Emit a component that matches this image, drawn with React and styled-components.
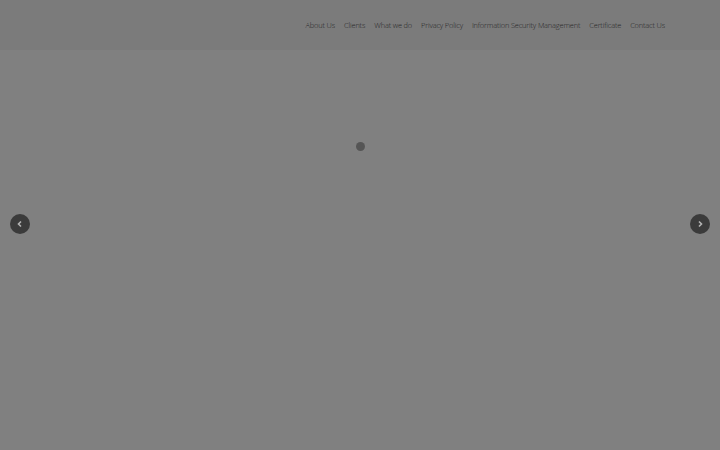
import React from "react";
import styled, { createGlobalStyle } from "styled-components";

const GlobalStyle = createGlobalStyle`
  html, body {
    margin: 0;
    padding: 0;
    background: #808080;
    font-family: "Open Sans", "Liberation Sans", sans-serif;
  }
  #root {
    height: 450px;
  }
`;

const Page = styled.div`
  position: relative;
  width: 720px;
  height: 450px;
  background: #808080;
  display: flex;
  flex-direction: column;
  overflow: hidden;
`;

const Header = styled.header`
  height: 50px;
  background: #7b7b7b;
  display: flex;
  align-items: center;
  justify-content: flex-end;
  padding-right: 55px;
  box-sizing: border-box;
`;

const Nav = styled.nav`
  display: flex;
  gap: 9px;
  margin-top: -1px;
`;

const NavLink = styled.a`
  font-size: 7.4px;
  font-weight: 300;
  color: #262626;
  text-decoration: none;
  letter-spacing: -0.15px;
`;

const Stage = styled.main`
  flex: 1;
  display: flex;
  justify-content: center;
  padding-top: 92px;
`;

const Loader = styled.div`
  width: 9px;
  height: 9px;
  border-radius: 50%;
  background: #555;
`;

const Arrow = styled.button`
  position: absolute;
  top: 214px;
  ${(p) => (p.side === "left" ? "left: 10px;" : "right: 10px;")}
  width: 20px;
  height: 20px;
  border-radius: 50%;
  border: none;
  padding: 0;
  background: #3b3b3b;
  display: flex;
  align-items: center;
  justify-content: center;
`;

const links = [
  "About Us",
  "Clients",
  "What we do",
  "Privacy Policy",
  "Information Security Management",
  "Certificate",
  "Contact Us",
];

const Chevron = ({ dir }) => (
  <svg width="8" height="8" viewBox="0 0 8 8">
    <path
      d={dir === "left" ? "M5 1.5 L2.5 4 L5 6.5" : "M3 1.5 L5.5 4 L3 6.5"}
      fill="none"
      stroke="#b5b5b5"
      strokeWidth="1.6"
    />
  </svg>
);

const App = () => {
  return (
    <Page>
      <GlobalStyle />
      <Header>
        <Nav>
          {links.map((l) => (
            <NavLink key={l} href="#">
              {l}
            </NavLink>
          ))}
        </Nav>
      </Header>
      <Stage>
        <Loader />
      </Stage>
      <Arrow side="left">
        <Chevron dir="left" />
      </Arrow>
      <Arrow side="right">
        <Chevron dir="right" />
      </Arrow>
    </Page>
  );
};

export default App;
